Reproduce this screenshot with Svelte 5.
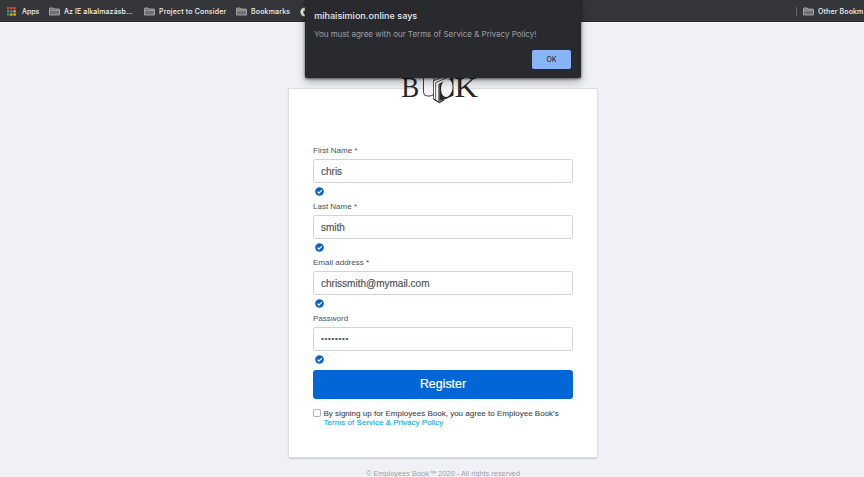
<script>
  const fields = [
    { label: 'First Name *', value: 'chris' },
    { label: 'Last Name *', value: 'smith' },
    { label: 'Email address *', value: 'chrissmith@mymail.com' },
    { label: 'Password', value: '••••••••', secret: true }
  ];
  const appColors = ['#ea4335', '#ea4335', '#ea4335', '#34a853', '#4285f4', '#fbbc05', '#34a853', '#fbbc05', '#fbbc05'];
</script>

{#snippet folder()}
  <svg class="folder" width="11" height="9" viewBox="0 0 11 9">
    <path d="M.5 8V1.5Q.5 1 1 1H4l1 1h5q.5 0 .5.5V8z" fill="#6e7072" stroke="#b4b6b8" stroke-width=".8" />
    <path d="M.8 3.3h9.4" stroke="#b4b6b8" stroke-width=".7" />
  </svg>
{/snippet}

<div class="page">
  <nav class="bar">
    <svg class="apps" width="9" height="9" viewBox="0 0 9 9">
      {#each appColors as color, i}
        <rect x={(i % 3) * 3.2} y={Math.floor(i / 3) * 3.2} width="2.3" height="2.3" fill={color} />
      {/each}
    </svg>
    <span class="t-apps">Apps</span>
    {@render folder()}<span class="t-az">Az IE alkalmazásb...</span>
    {@render folder()}<span class="t-project">Project to Consider</span>
    {@render folder()}<span class="t-marks">Bookmarks</span>
    <svg width="10" height="10" viewBox="0 0 10 10"><circle cx="5" cy="5" r="4.6" fill="#e8eaed" /><path d="M3 5l3-2 3 1v4H5z" fill="#35363a" /></svg>
    <div class="other"><i></i>{@render folder()}<span>Other Bookm</span></div>
  </nav>

  <main>
    <section class="card">
      <svg class="logo" width="84" height="40" viewBox="0 0 84 40">
        <text x="4.2" y="30" font-size="29.5" textLength="18" lengthAdjust="spacingAndGlyphs">B</text>
        <text x="57.5" y="30" font-size="29.5" textLength="23.5" lengthAdjust="spacingAndGlyphs">K</text>
        <g stroke="#292b2d">
          <rect x="26.5" y="5" width="10.5" height="24" rx="3.8" fill="#f6f6f6" stroke-width=".9" />
          <path d="M36 14 50 8h8v19.5L45.5 34 42 36l-6-4z" fill="#fff" stroke="none" />
          <path d="M36 14 50 8.5M39 15.5 54 9M42.5 17 58 10M36.5 14v18M38.7 15.5v18" stroke-width=".8" fill="none" />
          <path d="M36.5 32l5.8 3.5L47 33" stroke-width="1.1" fill="none" />
          <path d="M42 17v17.5" stroke-width="1.2" />
          <path d="M42.5 16.5 56.5 10v18.5L49 32l-6.5 2z" fill="#26282a" stroke="none" />
          <ellipse cx="49.8" cy="21" rx="5.7" ry="9" fill="#f5f5f5" stroke="none" transform="rotate(9 49.8 21)" />
        </g>
      </svg>
      <form>
        {#each fields as field}
          <div class="field">
            <span class="label">{field.label}</span>
            <div class="input" class:secret={field.secret}>{field.value}</div>
            <svg class="check" width="9" height="9" viewBox="0 0 9 9">
              <circle cx="4.5" cy="4.5" r="4.3" fill="#0861c5" />
              <path d="M2.5 4.6 4 6.1 6.8 3.1" fill="none" stroke="#fff" stroke-width="1.3" />
            </svg>
          </div>
        {/each}
        <button type="button" class="register">Register</button>
        <div class="agree">
          <span class="box"></span>
          <p><span class="line">By signing up for Employees Book, you agree to Employee Book's</span><br /><a href="#terms">Terms of Service &amp; Privacy Policy</a></p>
        </div>
      </form>
    </section>
    <footer>© Employees Book™ 2020 - All rights reserved</footer>
  </main>

  <div class="dialog">
    <h1>mihaisimion.online says</h1>
    <p>You must agree with our Terms of Service &amp; Privacy Policy!</p>
    <button type="button">OK</button>
  </div>
</div>

<style>
  :global(body) { overflow: hidden; }
  * { box-sizing: border-box; }
  .page {
    position: relative;
    width: 864px;
    height: 477px;
    overflow: hidden;
    background: #eff1f4;
    font-family: "Liberation Sans", Arial, sans-serif;
  }
  .bar {
    display: flex;
    align-items: center;
    height: 22px;
    padding: 2px 0 0 7px;
    background: #35363a;
    border-bottom: 1px solid #2b2c2f;
    color: #f0f1f2;
    font: 500 7px/10px Inter, sans-serif;
    letter-spacing: .1px;
    white-space: nowrap;
  }
  .bar svg, .bar span { flex: none; }
  .folder { margin-right: 4px; }
  .apps { margin-right: 6px; }
  .t-apps { width: 27px; letter-spacing: 0; }
  .t-az { width: 80px; }
  .t-project { width: 77px; letter-spacing: .17px; }
  .t-marks { width: 49px; letter-spacing: .17px; }
  .other {
    display: flex;
    align-items: center;
    width: 68px;
    margin-left: auto;
    letter-spacing: .15px;
  }
  .other i {
    flex: none;
    width: 1px;
    height: 9px;
    margin-right: 6px;
    background: #606266;
  }
  main {
    display: flex;
    flex-direction: column;
    align-items: center;
    padding: 67px 0 0 22px;
  }
  .card {
    position: relative;
    width: 308px;
    height: 368px;
    padding: 56px 24px 0;
    background: #fff;
    box-shadow: 0 0 0 1px #dddfe0, 0 1px 2px #999;
  }
  .logo {
    position: absolute;
    left: 108px;
    top: -22px;
    fill: #242628;
    font-family: "Liberation Serif", serif;
  }
  .field { height: 56.15px; }
  .label {
    display: block;
    height: 14px;
    color: #495057;
    font-size: 8px;
    line-height: 11px;
  }
  .input {
    height: 24px;
    padding-left: 7px;
    border: 1px solid #ced4da;
    border-radius: 2.5px;
    color: #495057;
    font-size: 10px;
    line-height: 23px;
    -webkit-text-stroke: .15px #495057;
  }
  .secret { font-size: 8px; line-height: 21px; letter-spacing: .7px; }
  .check { display: block; margin: 4px 0 0 2.3px; }
  .register {
    display: block;
    width: 260px;
    height: 29px;
    margin-top: .4px;
    padding: 0;
    border: 0;
    border-radius: 3px;
    background: #0366d6;
    color: #fff;
    font: 12.4px/29px "Liberation Sans", Arial, sans-serif;
    -webkit-text-stroke: .2px #fff;
  }
  .agree {
    display: flex;
    gap: 2.5px;
    margin-top: 10px;
  }
  .box {
    flex: none;
    width: 8px;
    height: 8px;
    border: 1px solid #b0b0b0;
    border-radius: 2px;
  }
  .agree p {
    margin: 0;
    color: #40464c;
    font-size: 8px;
    line-height: 9px;
    white-space: nowrap;
    -webkit-text-stroke: .1px currentColor;
  }
  .agree .line { letter-spacing: .01px; }
  .agree a { color: #08a9eb; text-decoration: none; letter-spacing: .02px; }
  footer {
    margin-top: 12px;
    color: #9aa2aa;
    font-size: 7.4px;
    line-height: 10px;
    white-space: nowrap;
  }
  .dialog {
    position: absolute;
    left: 305px;
    top: 0;
    width: 276px;
    height: 78px;
    padding: 10px 10px 0 9.2px;
    border-radius: 0 0 2px 2px;
    background: #292a2d;
    box-shadow: 0 1px 3px #0009, 0 4px 10px #0004;
    font-family: Inter, sans-serif;
    white-space: nowrap;
  }
  .dialog h1 {
    margin: 0;
    color: #e8eaed;
    font-size: 9px;
    font-weight: 500;
    line-height: 12px;
    letter-spacing: .03px;
  }
  .dialog p {
    margin: 7px 0 0;
    color: #9aa0a6;
    font-size: 8px;
    line-height: 10px;
    letter-spacing: -.02px;
  }
  .dialog button {
    display: block;
    width: 39px;
    height: 19px;
    margin: 11px 0 0 auto;
    padding: 0;
    border: 0;
    border-radius: 2px;
    background: #8ab4f8;
    color: #292e38;
    font: 500 7px/19px Inter, sans-serif;
  }
</style>
